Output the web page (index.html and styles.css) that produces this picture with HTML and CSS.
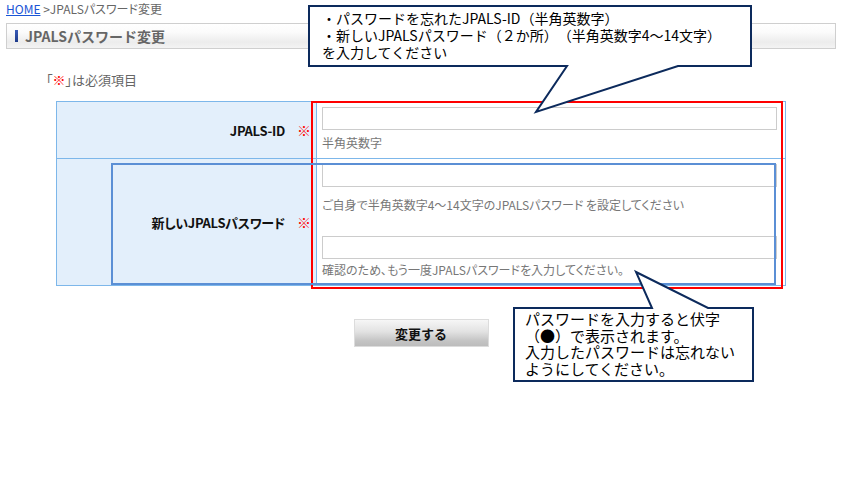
FILE: index.html
```html
<!DOCTYPE html>
<html lang="ja">
<head>
<meta charset="utf-8">
<title>JPALSパスワード変更</title>
<link rel="stylesheet" href="styles.css">
</head>
<body>
<div class="page">
  <div class="crumb"><a href="#">HOME</a> &gt;JPALSパスワード変更</div>
  <h1 class="title"><span class="mark"></span>JPALSパスワード変更</h1>
  <p class="note">「<span class="req">※</span>」は必須項目</p>
  <div class="form">
    <div class="row">
      <div class="label">JPALS-ID<span class="req">※</span></div>
      <div class="field">
        <input class="text" type="text">
        <p class="hint hint-a">半角英数字</p>
      </div>
    </div>
    <div class="row row-2">
      <div class="label">新しいJPALSパスワード<span class="req">※</span></div>
      <div class="field">
        <input class="text" type="password">
        <p class="hint hint-b">ご自身で半角英数字4〜14文字のJPALSパスワード を設定してください</p>
        <input class="text text-2" type="password">
        <p class="hint hint-c">確認のため、もう一度JPALSパスワードを入力してください。</p>
      </div>
    </div>
  </div>
  <div class="actions"><button class="btn" type="button">変更する</button></div>
</div>

<div class="frame-red"></div>
<div class="frame-blue"></div>

<svg class="callouts" width="850" height="494" viewBox="0 0 850 494">
  <path d="M309,6 H751 V66 H678 L536,112 L567,66 H309 Z" fill="#fff" stroke="#0c2a5c" stroke-width="2" stroke-linejoin="miter"/>
  <path d="M514,308 H652 L636,272 L708,308 H753 V381 H514 Z" fill="#fff" stroke="#0c2a5c" stroke-width="2" stroke-linejoin="miter"/>
</svg>
<div class="callout-text c1">・パスワードを忘れたJPALS-ID（半角英数字）<br>・新しいJPALSパスワード（２か所）（半角英数字4〜14文字）<br>を入力してください</div>
<div class="callout-text c2">パスワードを入力すると伏字<br>（●）で表示されます。<br>入力したパスワードは忘れない<br>ようにしてください。</div>
</body>
</html>
```

FILE: styles.css
```css
html, body {
  margin: 0;
  padding: 0;
  background: #fff;
}
body {
  font-family: "Noto Sans CJK JP", "DejaVu Sans", sans-serif;
  font-size: 12px;
  color: #333;
  width: 850px;
  height: 494px;
  position: relative;
  overflow: hidden;
}
.page {
  margin-left: 6px;
  width: 830px;
}
.crumb {
  font-size: 12px;
  line-height: 18px;
  color: #666;
  font-feature-settings: "palt";
}
.crumb a {
  color: #1a55d6;
  text-decoration: underline;
}
.title {
  margin: 5px 0 0;
  height: 26px;
  box-sizing: border-box;
  border: 1px solid #cfcfcf;
  background: linear-gradient(#ffffff 0%, #fbfbfb 35%, #ececec 75%, #f3f3f3 100%);
  font-size: 14px;
  font-weight: bold;
  color: #666;
  line-height: 24px;
  display: flex;
  align-items: center;
  padding-left: 8px;
}
.mark {
  display: inline-block;
  width: 3px;
  height: 12px;
  background: linear-gradient(#3b5cb8, #1d3a8a);
  margin-right: 7px;
}
.note {
  margin: 22px 0 12px 40px;
  font-size: 13px;
  line-height: 18px;
  color: #666;
  font-feature-settings: "palt";
}
.req {
  color: #f00;
  font-weight: bold;
}
.form {
  margin-left: 50px;
  width: 730px;
  box-sizing: border-box;
  border: 1px solid #7db7ea;
}
.row {
  display: flex;
}
.row-2 {
  border-top: 1px solid #7db7ea;
}
.label {
  width: 260px;
  flex: none;
  border-right: 1px solid #7db7ea;
  background: #e3effb;
  display: flex;
  align-items: center;
  justify-content: flex-end;
  padding-right: 5px;
  box-sizing: border-box;
  font-size: 13px;
  font-weight: bold;
  color: #111;
  font-feature-settings: "palt";
  letter-spacing: -0.3px;
}
.label .req {
  margin-left: 12px;
  font-size: 14px;
  letter-spacing: 0;
}
.field {
  flex: 1;
  padding: 5px 0 6px 5px;
}
.text {
  display: block;
  width: 455px;
  height: 23px;
  box-sizing: border-box;
  border: 1px solid #cccccc;
  padding: 0;
  margin: 0;
  background: #fff;
  outline: none;
}
.text-2 {
  margin-top: 22px;
}
.hint {
  margin: 0;
  font-size: 12px;
  line-height: 18px;
  color: #777;
  white-space: nowrap;
  font-feature-settings: "palt";
}
.hint-a { margin-top: 4px; }
.hint-b { margin-top: 9px; }
.hint-c { margin-top: 2px; }
.actions {
  margin-left: 50px;
  width: 730px;
  margin-top: 33px;
  text-align: center;
}
.btn {
  width: 135px;
  height: 28px;
  box-sizing: border-box;
  border: 1px solid #dcdcdc;
  background: linear-gradient(#f6f6f6 0%, #e2e2e2 45%, #c4c4c4 80%, #bcbcbc 100%);
  font-family: "Noto Sans CJK JP", sans-serif;
  font-size: 13px;
  font-weight: bold;
  color: #111;
  padding: 0;
  margin: 0;
}
.frame-red {
  position: absolute;
  left: 311px;
  top: 101px;
  width: 472px;
  height: 188px;
  box-sizing: border-box;
  border: 2px solid #f00;
}
.frame-blue {
  position: absolute;
  left: 111px;
  top: 163px;
  width: 665px;
  height: 122px;
  box-sizing: border-box;
  border: 2px solid #5b8fd5;
}
.callouts {
  position: absolute;
  left: 0;
  top: 0;
  pointer-events: none;
}
.callout-text {
  position: absolute;
  color: #000;
  white-space: nowrap;
  text-spacing-trim: space-all;
}
.c1 {
  left: 322px;
  top: 10px;
  font-size: 14px;
  line-height: 17px;
}
.c2 {
  left: 525px;
  top: 311px;
  font-size: 15px;
  line-height: 16.7px;
}
```
